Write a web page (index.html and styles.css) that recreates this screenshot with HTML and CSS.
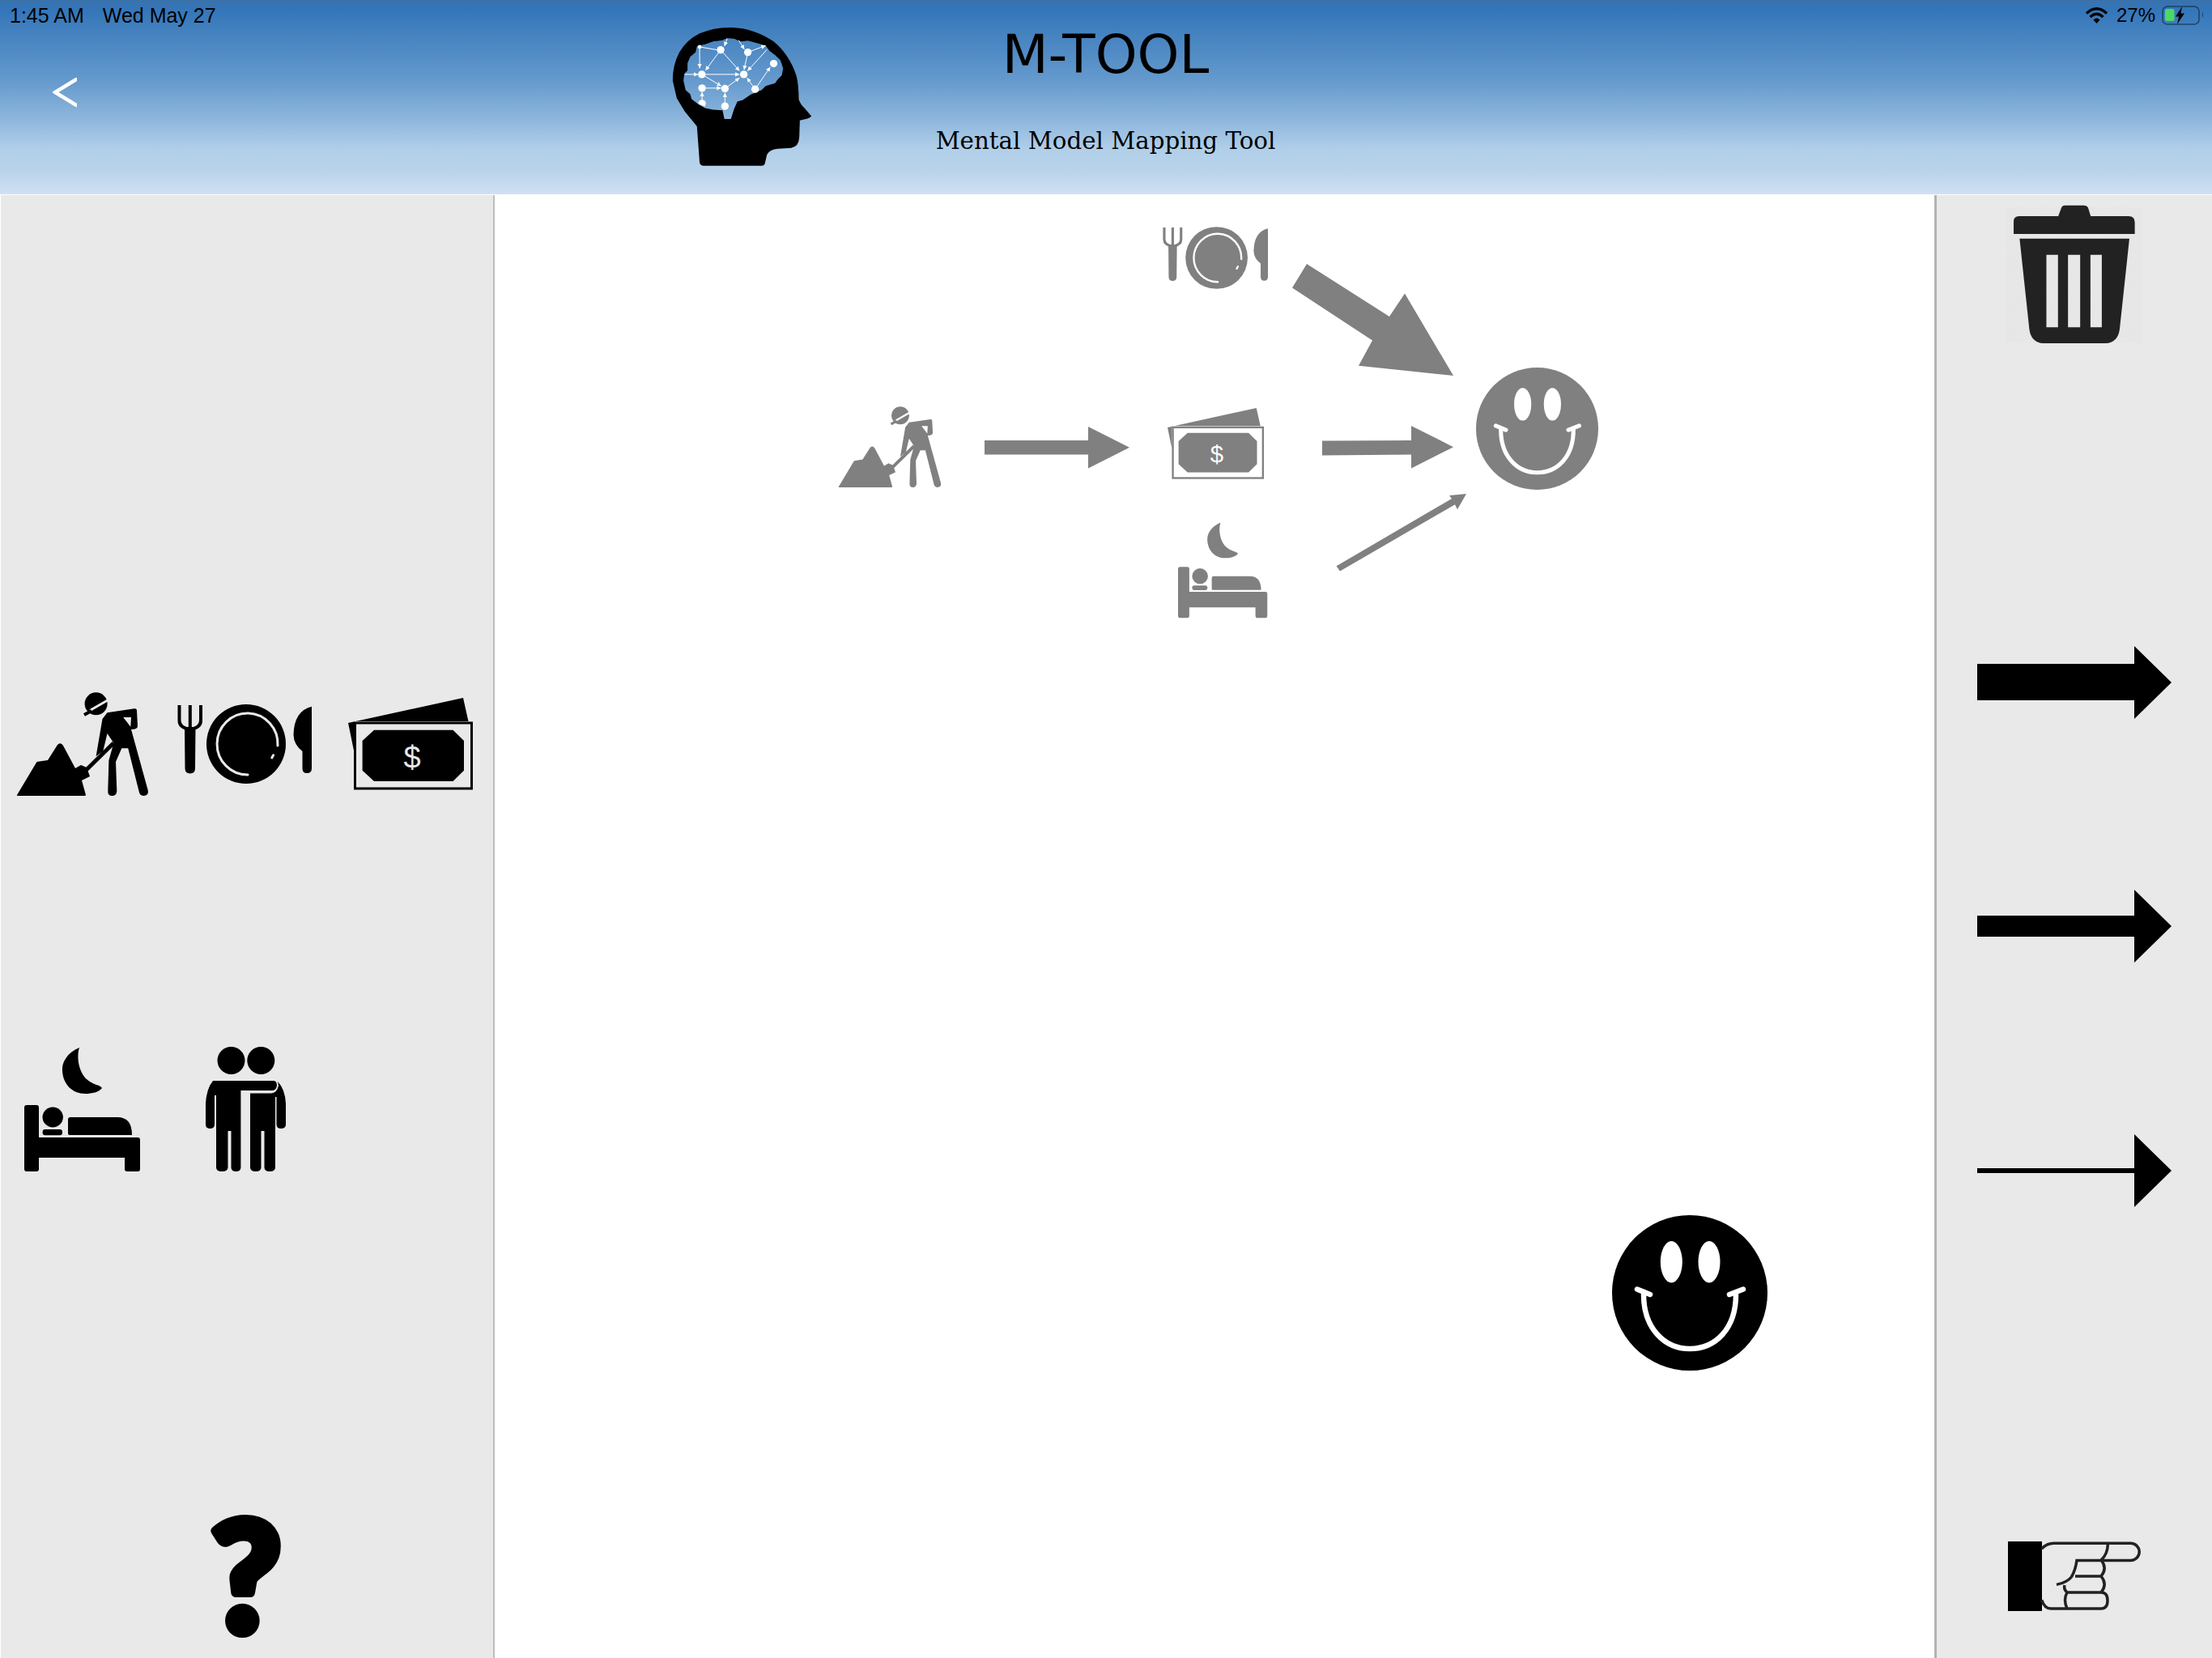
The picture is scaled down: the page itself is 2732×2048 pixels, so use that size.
FILE: index.html
```html
<!DOCTYPE html>
<html lang="en">

<head>
    <meta charset="UTF-8">
    <meta name="viewport" content="width=device-width, initial-scale=1.0">
    <title>M-TOOL</title>
    <link rel="stylesheet" href="styles.css">
</head>

<body>
    <!-- shared pictures for the palette and the canvas -->
    <svg class="sprites" aria-hidden="true">
        <symbol id="worker" viewBox="0 0 164 128">
            <path d="M1 127 25.5 86 39 84 51 65Q55 61 58 66L73 94 80 90 87 93 91 104 81 109 86 127Q86 128 84 128H2Q0 128 1 127Z" />
            <circle cx="98.6" cy="14.3" r="14" />
            <line class="cut thin" x1="92" y1="22" x2="112" y2="10.5" />
            <line class="bar" x1="84" y1="28" x2="93" y2="23" />
            <path fill-rule="evenodd" d="M106.5 33 112.5 25.3 146 20.3Q149 20 149 23L150 42Q150 46 142 46L162.7 121Q164 127 158 128 153 128 152 124L138.2 69.3H130.3L123 86 124.3 122Q124 128 118.4 128 113 128 113.3 122L114.4 84.3 120.4 62.7 112.5 51 107.3 72.7 98.6 79.3ZM132.2 31H142L141.3 42.7Z" />
            <line class="bar wide" x1="120.4" y1="62.7" x2="84.8" y2="97.7" />
        </symbol>
        <symbol id="dinner" viewBox="0 0 166 98">
            <path class="bar" d="M2.5 1V20Q2.5 29 15.8 31 29 29 29 20V1M15.8 1V31" />
            <path d="M9 28H22.5L22 79Q22 85.5 15.8 85.5 9.5 85.5 9.5 79Z" />
            <circle cx="85" cy="49" r="49" />
            <path class="cut thin" d="M87 87A37.5 38 0 1 1 124 51" />
            <line class="cut thin" x1="118.6" y1="62.7" x2="116.8" y2="66" />
            <path d="M166 2.7V79Q166 85 160 85 154.5 85 154.5 79V58Q144 50 143.5 38 144 8 166 2.7Z" />
        </symbol>
        <symbol id="money" viewBox="0 0 154 114">
            <path d="M0 31 142 0 148.5 29H7V65Z" />
            <rect class="frame" x="8.5" y="31" width="144" height="81" />
            <path d="M32 39.7H129.5L143 53V89.7L129.5 103H32L17.6 89.7V53Z" />
        </symbol>
        <symbol id="bed" viewBox="0 0 144 154">
            <path d="M68 1C52 8 46 20 47 30 48 47 60 58 75 58 84 58 92 56 96 51 94 47 84 47 77 40 68 32 64 14 68 1Z" />
            <path d="M3 72H15Q18 72 18 75V112H140Q143 112 143 115V151Q143 154 140 154H127Q124 154 124 151V137H18V151Q18 154 15 154H3Q0 154 0 151V75Q0 72 3 72Z" />
            <ellipse cx="35.2" cy="87" rx="12.7" ry="12.5" />
            <rect x="22.6" y="102" width="24.4" height="7.3" rx="3" />
            <path d="M54 90Q54 87 57 87H115Q133 87 133 109H56Q54 109 54 107Z" />
        </symbol>
        <symbol id="friends" viewBox="0 0 100 154">
            <ellipse cx="31.5" cy="17" rx="17" ry="17" />
            <ellipse cx="68.3" cy="17" rx="17" ry="17" />
            <path d="M9 42H84Q88 42 88 48 87 54 82 54H43.4V149Q43.4 154 37.5 154 31.5 154 31.5 149V104H27.5V149Q27.5 154 20 154 13 154 13 149V60H11V96Q11 101 5.5 101 0 101 0 96V70Q1 52 9 42Z" />
            <path d="M55 57.5H81Q88 57 90 48L89 43Q98 52 99 70V96Q99 101 93 101 87.5 101 87.5 96V62H86V149Q86 154 79 154 72.5 154 72.5 149V104H68.5V149Q68.5 154 62 154 55 154 55 149Z" />
        </symbol>
        <symbol id="smile" viewBox="0 0 192 192">
            <circle cx="96" cy="96" r="96" />
            <ellipse class="blank" cx="73.3" cy="57.7" rx="13.5" ry="25.7" />
            <ellipse class="blank" cx="120" cy="57.7" rx="13.5" ry="25.7" />
            <path class="smile-line" d="M39 98C39 140 65 165 96 165 128 165 153 140 153 98M31 91.5 47 98M162 91.5 145 98" />
        </symbol>
        <pattern id="hatch" width="9" height="9" patternUnits="userSpaceOnUse" patternTransform="rotate(45)">
            <rect class="hatch-line" width="3" height="9" />
        </pattern>
        <marker id="logo-tip" markerWidth="20" markerHeight="20" refX="16" refY="8" orient="auto" markerUnits="userSpaceOnUse">
            <path class="blank" d="M0 0 16 8 0 16Z" />
        </marker>
    </svg>

    <div class="app">
        <header class="top-bar">
            <div class="status-bar">
                <span class="status-time">1:45 AM</span>
                <span class="status-date">Wed May 27</span>
                <div class="status-right">
                    <svg class="wifi" viewBox="0 0 27 20">
                        <path d="M1 7.5Q13.5 -4 26 7.5M5.5 12Q13.5 4.5 21.5 12" />
                        <path class="wifi-dot" d="M9.5 15.5Q13.5 11.5 17.5 15.5L13.5 20Z" />
                    </svg>
                    <span class="status-level">27%</span>
                    <svg class="battery" viewBox="0 0 52 24">
                        <rect class="battery-case" x="1" y="1" width="45" height="22" rx="6" />
                        <rect class="battery-level" x="4" y="4" width="11.5" height="15" rx="2.5" />
                        <path d="M25 1 17 13.5H21L19 23 28 9.5H23.5Z" />
                        <path class="battery-nub" d="M50 7Q52 12 50 15Z" />
                    </svg>
                </div>
            </div>
            <button class="back-btn" aria-label="Back">
                <svg viewBox="0 0 30 36">
                    <path d="M33 -0.3 3 18 33 36.3" />
                </svg>
            </button>
            <svg class="logo" viewBox="145 100 525 520">
                <path fill-rule="evenodd" d="M250 605 240 470 195 415 165 365 150 300Q150 240 175 195 200 150 250 125 310 100 370 103 450 105 525 155 585 205 610 285 618 320 618 370 625 390 640 403L665 432Q660 438 650 441L622 448 620 510Q618 545 590 550L540 553Q510 555 500 575L493 605Q492 616 480 616H265Q252 616 250 605ZM190 300 193 275 205 262 205 235 215 212 235 195 240 172 270 165 300 155 335 150 352 142 380 145 400 155 430 152 460 160 495 170 510 190 530 205 550 225 560 255 555 280 540 295 530 310 495 320 480 335 440 352 410 372 390 378 378 405 366 443H342L335 410 300 408 270 402 245 388 220 368 215 350 198 335Z" />
                <g class="logo-net">
                    <line x1="258" y1="277" x2="398" y2="277" marker-end="url(#logo-tip)" />
                    <line x1="195" y1="277" x2="244" y2="277" marker-end="url(#logo-tip)" />
                    <line x1="328" y1="186" x2="272" y2="262" marker-end="url(#logo-tip)" />
                    <line x1="250" y1="175" x2="250" y2="254" marker-end="url(#logo-tip)" />
                    <line x1="250" y1="175" x2="315" y2="186" />
                    <line x1="328" y1="186" x2="398" y2="264" marker-end="url(#logo-tip)" />
                    <line x1="352" y1="145" x2="342" y2="172" marker-end="url(#logo-tip)" />
                    <line x1="395" y1="150" x2="416" y2="184" marker-end="url(#logo-tip)" />
                    <line x1="429" y1="195" x2="415" y2="260" marker-end="url(#logo-tip)" />
                    <line x1="429" y1="195" x2="495" y2="170" marker-end="url(#logo-tip)" />
                    <line x1="500" y1="185" x2="428" y2="264" marker-end="url(#logo-tip)" />
                    <line x1="456" y1="332" x2="512" y2="250" marker-end="url(#logo-tip)" />
                    <line x1="456" y1="332" x2="426" y2="290" marker-end="url(#logo-tip)" />
                    <line x1="258" y1="277" x2="330" y2="320" marker-end="url(#logo-tip)" />
                    <line x1="259" y1="328" x2="330" y2="328" marker-end="url(#logo-tip)" />
                    <line x1="344" y1="330" x2="398" y2="290" marker-end="url(#logo-tip)" />
                    <line x1="344" y1="395" x2="344" y2="346" marker-end="url(#logo-tip)" />
                    <line x1="259" y1="385" x2="259" y2="343" marker-end="url(#logo-tip)" />
                </g>
                <g class="blank">
                    <circle cx="258" cy="277" r="14" />
                    <circle cx="328" cy="186" r="14" />
                    <circle cx="414" cy="277" r="14" />
                    <circle cx="429" cy="195" r="14" />
                    <circle cx="525" cy="237" r="14" />
                    <circle cx="456" cy="332" r="14" />
                    <circle cx="344" cy="330" r="14" />
                    <circle cx="259" cy="328" r="14" />
                    <circle cx="344" cy="395" r="14" />
                    <path d="M245 382A14 12 0 0 1 273 385L270 396 248 388Z" />
                    <circle cx="250" cy="175" r="7" />
                </g>
            </svg>
            <div class="title-box">
                <h1>M-TOOL</h1>
                <p>Mental Model Mapping Tool</p>
            </div>
        </header>

        <main class="workspace">
            <aside class="palette">
                <div class="palette-gap"></div>
                <div class="tool"><svg class="icon icon-worker"><use href="#worker" /></svg></div>
                <div class="tool tool-dinner"><svg class="icon icon-dinner"><use href="#dinner" /></svg></div>
                <div class="tool">
                    <svg class="icon icon-money" viewBox="0 0 154 114"><use href="#money" /><text class="note-sign" x="79" y="87">$</text></svg>
                </div>
                <div class="tool"><svg class="icon icon-bed"><use href="#bed" /></svg></div>
                <div class="tool"><svg class="icon icon-friends"><use href="#friends" /></svg></div>
                <div class="tool tool-help">
                    <svg class="help-mark" viewBox="0 0 110 160"><text x="55" y="150">?</text></svg>
                </div>
            </aside>

            <section class="canvas">
                <svg class="node node-dinner"><use href="#dinner" /></svg>
                <svg class="node node-worker"><use href="#worker" /></svg>
                <svg class="node node-money" viewBox="0 0 154 114"><use href="#money" /><text class="note-sign" x="79" y="87">$</text></svg>
                <svg class="node node-bed"><use href="#bed" /></svg>
                <svg class="node node-smile"><use href="#smile" /></svg>
                <svg class="links" viewBox="611 241 1778 1807">
                    <polygon points="1614,326 1596,355.5 1695,420.4 1678,451.8 1795,464 1735,362.6 1716,391" />
                    <polygon points="1216,544 1344,544 1344,527 1395,552.7 1344,578.6 1344,561.4 1216,561.4" />
                    <polygon points="1633,544.6 1743,544 1743,525.9 1795,552.2 1743,578.6 1743,561.4 1633,562.4" />
                    <polygon points="1650.5,699.3 1793,616 1790,612 1811,610 1800,629.3 1797,623.2 1655,705.4" />
                </svg>
                <svg class="new-smile"><use href="#smile" /></svg>
            </section>

            <aside class="tools">
                <div class="tool-slot slot-trash">
                    <svg class="trash" viewBox="290 70 506 512">
                        <rect x="292" y="78" width="503" height="502" fill="url(#hatch)" />
                        <path d="M320 132Q320 112 340 112H485L497 80Q500 72 510 72H580Q590 72 595 80L605 112H745Q768 112 768 135V178H320Z" />
                        <path fill-rule="evenodd" d="M342 195H748L712 530Q705 580 660 582H430Q385 580 378 530ZM441 255V523H484V255ZM521 255V523H566V255ZM604 255V523H646V255Z" />
                    </svg>
                </div>
                <div class="tool-slot">
                    <svg class="weight" viewBox="0 0 240 90"><path d="M0 22H194V0L240 45 194 90V67H0Z" /></svg>
                </div>
                <div class="tool-slot">
                    <svg class="weight" viewBox="0 0 240 90"><path d="M0 32H194V0L240 45 194 90V58H0Z" /></svg>
                </div>
                <div class="tool-slot">
                    <svg class="weight" viewBox="0 0 240 90"><path d="M0 42H194V0L240 45 194 90V48H0Z" /></svg>
                </div>
                <div class="tool-slot slot-pointer">
                    <svg class="pointer" viewBox="0 0 164 87">
                        <rect width="42" height="86" />
                        <path class="pointer-line" d="M41.7 9Q48 2.3 56.7 2.3H151.7A10.5 10.5 0 0 1 151.7 23.4H85Q83.3 35.7 78.3 44 73 50.7 60 53.4M123.3 4Q123 16 115 23Q123.3 33 115 43H83M115 43Q123.3 53 115 63H73Q68.5 59 70 54M41.7 72.3Q45 83 53 83H115Q123 83 123 73 123 63 115 63M73 63Q68 72 73 83" />
                    </svg>
                </div>
            </aside>
        </main>
    </div>
</body>

</html>
```

FILE: styles.css
```css
* {
    box-sizing: border-box;
}

html,
body {
    margin: 0;
    height: 100%;
    overflow: hidden;
    background: #fff;
}

.sprites {
    position: absolute;
    width: 0;
    height: 0;
}

.app {
    height: 100vh;
    display: flex;
    flex-direction: column;
}

/* header */
.top-bar {
    position: relative;
    height: 240px;
    flex: none;
    display: grid;
    grid-template-columns: 829px 172px 729px 1fr;
    background: linear-gradient(to bottom, #3a72ab 0, #3375b9 10px, #659acd 100px, #90b8dd 150px, #b1cfe9 185px, #b8d3ea 210px, #cfe0f3 240px);
}

.status-bar {
    position: absolute;
    top: 0;
    left: 0;
    right: 0;
    height: 38px;
    padding: 0 10px 0 12px;
    display: flex;
    align-items: center;
    font: 25px "Liberation Sans", sans-serif;
    color: #000;
}

.status-date {
    margin-left: 23px;
}

.status-right {
    margin-left: auto;
    display: flex;
    align-items: center;
}

.status-level {
    font-size: 24px;
}

.wifi {
    width: 27px;
    height: 20px;
    margin-right: 11px;
    fill: none;
    stroke: #000;
    stroke-width: 3.2;
}

.wifi-dot {
    fill: #000;
    stroke: none;
}

.battery {
    width: 52px;
    height: 24px;
    margin-left: 8px;
}

.battery-case {
    fill: none;
    stroke: #000;
    stroke-opacity: 0.45;
    stroke-width: 1.6;
}

.battery-level {
    fill: #4cd964;
}

.battery-nub {
    opacity: 0.45;
}

.back-btn {
    width: 30px;
    height: 36px;
    margin: 96px 0 0 65px;
    padding: 0;
    border: none;
    background: none;
}

.back-btn svg {
    display: block;
    width: 30px;
    height: 36px;
    fill: none;
    stroke: #fff;
    stroke-width: 4.5;
}

.logo {
    width: 175px;
    height: 173px;
    margin-top: 33px;
}

.logo-net line {
    stroke: #fff;
    stroke-width: 3;
}

.title-box {
    text-align: center;
}

.title-box h1 {
    margin: 30px 0 0;
    font: normal 66px/76px "DejaVu Sans", sans-serif;
    color: #000;
}

.title-box p {
    margin: 50px 0 0;
    font: 29.3px/36px "DejaVu Serif", serif;
    color: #000;
}

/* three columns under the header */
.workspace {
    flex: 1;
    min-height: 0;
    margin-top: 1px;
    display: flex;
}

.palette {
    width: 610px;
    margin-left: 1px;
    display: grid;
    grid-template-columns: 202px 202px 1fr;
    grid-template-rows: repeat(4, 1fr);
    background: #e9e9e9;
    border-right: 2px solid #bdbdbd;
}

.palette-gap {
    grid-column: 1 / -1;
}

.tool {
    display: flex;
    align-items: center;
    justify-content: center;
}

.tool-dinner {
    margin-right: 4px;
}

.tool-help {
    grid-column: 2;
    grid-row: 4;
    align-items: flex-end;
    padding-bottom: 22px;
}

.help-mark {
    width: 110px;
    height: 160px;
}

.help-mark text {
    font: 900 188px Lato, sans-serif;
    text-anchor: middle;
    fill: #000;
    stroke: #000;
    stroke-width: 12;
    stroke-linejoin: round;
}

.icon {
    --hole: #e9e9e9;
    fill: #000;
    color: #000;
}

.icon-worker {
    width: 164px;
    height: 128px;
}

.icon-dinner {
    width: 166px;
    height: 98px;
}

.icon-money {
    width: 154px;
    height: 114px;
}

.icon-bed {
    width: 144px;
    height: 154px;
}

.icon-friends {
    width: 100px;
    height: 154px;
}

/* parts of the shared pictures */
.cut,
.bar,
.frame,
.smile-line {
    fill: none;
}

.cut {
    stroke: var(--hole);
}

.thin {
    stroke-width: 3;
    stroke-linecap: round;
}

.bar {
    stroke: currentColor;
    stroke-width: 4;
}

.wide {
    stroke-width: 5;
}

.frame {
    stroke: currentColor;
    stroke-width: 3;
}

.note-sign {
    font: 38px "Liberation Sans", sans-serif;
    text-anchor: middle;
    fill: var(--hole);
}

.blank {
    fill: #fff;
}

.smile-line {
    stroke: #fff;
    stroke-width: 6.5;
    stroke-linecap: round;
}

/* drawing area */
.canvas {
    position: relative;
    flex: 1;
    background: #fff;
}

.node,
.links,
.new-smile {
    position: absolute;
}

.node {
    --hole: #fff;
    fill: #808080;
    color: #808080;
}

.node-dinner {
    left: 825px;
    top: 39px;
    width: 130px;
    height: 77px;
}

.node-worker {
    left: 424px;
    top: 261px;
    width: 128px;
    height: 100px;
}

.node-money {
    left: 831px;
    top: 262px;
    width: 119px;
    height: 90px;
}

.node-bed {
    left: 844px;
    top: 403px;
    width: 111px;
    height: 120px;
}

.node-smile {
    left: 1212px;
    top: 213px;
    width: 151px;
    height: 151px;
}

.links {
    inset: 0;
    width: 100%;
    height: 100%;
    fill: #808080;
}

.new-smile {
    left: 1380px;
    top: 1260px;
    width: 192px;
    height: 192px;
    fill: #000;
}

/* right column */
.tools {
    width: 343px;
    display: grid;
    grid-template-rows: 3fr 2fr 2fr 2fr 3fr;
    background: #e9e9e9;
    border-left: 3px solid #b3b3b3;
}

.tool-slot {
    display: flex;
    align-items: center;
    justify-content: center;
}

.slot-trash {
    align-items: flex-start;
    padding: 12px 2px 0 0;
}

.slot-pointer {
    align-items: flex-end;
    padding-bottom: 57px;
}

.trash {
    width: 169px;
    height: 171px;
    fill: #222;
}

.hatch-line {
    fill: #e2e2e2;
}

.weight {
    width: 240px;
    height: 90px;
}

.pointer {
    width: 164px;
    height: 87px;
}

.pointer-line {
    fill: none;
    stroke: #222;
    stroke-width: 3.5;
}
```
